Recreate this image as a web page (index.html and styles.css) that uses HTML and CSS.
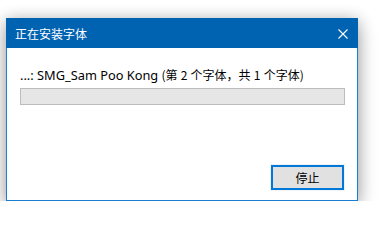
FILE: index.html
```html
<!DOCTYPE html>
<html lang="zh-CN">
<head>
<meta charset="utf-8">
<title>正在安装字体</title>
<link rel="stylesheet" href="styles.css">
</head>
<body>
<div class="window">
  <div class="titlebar">
    <span class="title">正在安装字体</span>
    <svg class="close" width="10" height="10" viewBox="0 0 10 10" aria-hidden="true">
      <path d="M0.5 0.5 L9.5 9.5 M9.5 0.5 L0.5 9.5" stroke="#fff" stroke-width="1.1" fill="none"/>
    </svg>
  </div>
  <div class="content">
    <div class="status"><span class="latin">...: SMG_Sam Poo Kong </span><span class="cjk">(第 2 个字体，共 1 个字体)</span></div>
    <div class="progress"></div>
    <div class="spacer"></div>
    <div class="actions">
      <button class="btn">停止</button>
    </div>
  </div>
</div>
</body>
</html>
```

FILE: styles.css
```css
html, body {
  margin: 0;
  padding: 0;
  background: #ffffff;
}

body {
  font-family: "Noto Sans", "Noto Sans CJK SC", sans-serif;
  font-size: 12px;
  color: #000;
}

.window {
  box-sizing: border-box;
  margin: 18px 0 0 6px;
  width: 352px;
  height: 183px;
  border: 1px solid #1a7fd0;
  background: #ffffff;
  box-shadow: 0 7px 18px rgba(0, 0, 0, 0.3), 0 0 14px rgba(0, 0, 0, 0.16);
  display: flex;
  flex-direction: column;
}

.titlebar {
  height: 30px;
  margin: -1px -1px 0 -1px;
  padding: 0 10px 0 9px;
  background: #0063b1;
  display: flex;
  align-items: center;
  justify-content: space-between;
}

.title {
  color: #ffffff;
  font-family: "Noto Sans CJK SC", sans-serif;
  font-size: 12px;
  line-height: 16px;
  padding-top: 1px;
}

.close {
  display: block;
  margin-top: 1px;
}

.content {
  flex: 1;
  display: flex;
  flex-direction: column;
  padding: 19px 13px 10px 13px;
}

.status {
  line-height: 16px;
  height: 16px;
  white-space: nowrap;
}

.latin {
  font-family: "Noto Sans", sans-serif;
  font-size: 12.8px;
}

.cjk {
  font-family: "Noto Sans CJK SC", sans-serif;
  font-size: 12px;
  word-spacing: 0.5px;
}

.progress {
  box-sizing: border-box;
  margin-top: 5px;
  height: 17px;
  width: 325px;
  background: #e6e6e6;
  border: 1px solid #bcbcbc;
}

.spacer {
  flex: 1;
}

.actions {
  display: flex;
  justify-content: flex-end;
}

.btn {
  box-sizing: border-box;
  width: 73px;
  height: 25px;
  margin: 0;
  padding: 0;
  background: #e1e1e1;
  border: 2px solid #0078d7;
  outline: 1px solid #eef3f8;
  font-family: "Noto Sans CJK SC", sans-serif;
  font-size: 12px;
  color: #000;
  line-height: 19px;
}
```
